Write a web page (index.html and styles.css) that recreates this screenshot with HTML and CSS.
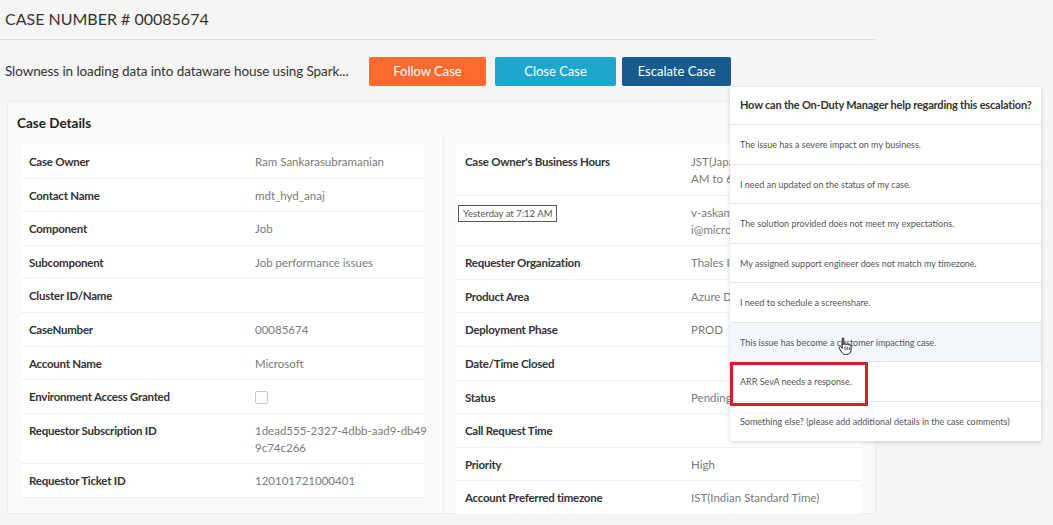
FILE: index.html
```html
<!DOCTYPE html>
<html>
<head>
<meta charset="utf-8">
<link rel="stylesheet" href="styles.css">
</head>
<body>
<div class="page">
  <h1 class="title">CASE NUMBER # 00085674</h1>
  <div class="rule"></div>
  <div class="subject-row">
    <span class="subject">Slowness in loading data into dataware house using Spark...</span>
    <button class="btn btn-follow">Follow Case</button>
    <button class="btn btn-close">Close Case</button>
    <button class="btn btn-escalate">Escalate Case</button>
  </div>

  <section class="panel">
    <h2 class="panel-title">Case Details</h2>
    <div class="cols">
      <div class="col col-left">
        <div class="row"><div class="lbl">Case Owner</div><div class="val">Ram Sankarasubramanian</div></div>
        <div class="row"><div class="lbl">Contact Name</div><div class="val">mdt_hyd_anaj</div></div>
        <div class="row"><div class="lbl">Component</div><div class="val">Job</div></div>
        <div class="row"><div class="lbl">Subcomponent</div><div class="val">Job performance issues</div></div>
        <div class="row"><div class="lbl">Cluster ID/Name</div><div class="val"></div></div>
        <div class="row"><div class="lbl">CaseNumber</div><div class="val">00085674</div></div>
        <div class="row"><div class="lbl">Account Name</div><div class="val">Microsoft</div></div>
        <div class="row"><div class="lbl">Environment Access Granted</div><div class="val"><span class="checkbox"></span></div></div>
        <div class="row"><div class="lbl">Requestor Subscription ID</div><div class="val nowrap">1dead555-2327-4dbb-aad9-db49<br>9c74c266</div></div>
        <div class="row"><div class="lbl">Requestor Ticket ID</div><div class="val">120101721000401</div></div>
      </div>
      <div class="col col-right">
        <div class="row"><div class="lbl">Case Owner's Business Hours</div><div class="val clip">JST(Japan Standard Time) 9:00<br>AM to 6:00 PM</div></div>
        <div class="row"><div class="lbl"><span class="tip">Yesterday at 7:12 AM</span></div><div class="val clip">v-askamani@microsoft.com<br>i@microsoft.com</div></div>
        <div class="row"><div class="lbl">Requester Organization</div><div class="val clip">Thales IND</div></div>
        <div class="row"><div class="lbl">Product Area</div><div class="val clip">Azure Databricks</div></div>
        <div class="row"><div class="lbl">Deployment Phase</div><div class="val clip">PROD</div></div>
        <div class="row"><div class="lbl">Date/Time Closed</div><div class="val"></div></div>
        <div class="row"><div class="lbl">Status</div><div class="val clip">Pending Customer</div></div>
        <div class="row"><div class="lbl">Call Request Time</div><div class="val"></div></div>
        <div class="row"><div class="lbl">Priority</div><div class="val">High</div></div>
        <div class="row"><div class="lbl">Account Preferred timezone</div><div class="val">IST(Indian Standard Time)</div></div>
      </div>
    </div>
  </section>

  <div class="menu">
    <div class="menu-head">How can the On-Duty Manager help regarding this escalation?</div>
    <div class="menu-item">The issue has a severe impact on my business.</div>
    <div class="menu-item">I need an updated on the status of my case.</div>
    <div class="menu-item">The solution provided does not meet my expectations.</div>
    <div class="menu-item">My assigned support engineer does not match my timezone.</div>
    <div class="menu-item">I need to schedule a screenshare.</div>
    <div class="menu-item hover">This issue has become a customer impacting case.</div>
    <div class="menu-item">ARR SevA needs a response.</div>
    <div class="menu-item">Something else? (please add additional details in the case comments)</div>
  </div>
  <div class="highlight"></div>
  <svg class="cursor" width="14" height="19" viewBox="0 0 14 19">
    <path d="M4.5 1.2c.8 0 1.3.6 1.3 1.3v5.2c.2-.6.7-.9 1.3-.9.7 0 1.2.5 1.3 1.1.2-.5.7-.8 1.2-.8.7 0 1.2.5 1.3 1.2.2-.3.6-.5 1-.5.7 0 1.2.6 1.2 1.3v3.6c0 2.6-1.8 4.8-4.4 4.8H7.4c-1.5 0-2.6-.7-3.4-1.9L1.3 11.4c-.4-.6-.2-1.4.4-1.700.6-.3 1.2-.1 1.6.4l.9 1.3V2.5c0-.7.5-1.3 1.3-1.3z" fill="#fff" stroke="#111" stroke-width="1" stroke-linejoin="round"/>
    <path d="M7 9.5v3.5M9.2 9.6v3.4M11.3 10.2v2.8" stroke="#111" stroke-width=".8" fill="none"/>
  </svg>
</div>
</body>
</html>
```
FILE: styles.css
```css
* { box-sizing: border-box; }
html, body { margin: 0; padding: 0; }
body {
  background: #f5f5f5;
  font-family: "Lato", "Open Sans", sans-serif;
  color: #333;
  width: 1053px;
  height: 525px;
  overflow: hidden;
}
.page { position: relative; width: 1053px; height: 525px; }
.title {
  margin: 0;
  padding: 9px 0 0 5px;
  height: 39px;
  font-size: 16px;
  font-weight: 400;
  color: #333;
}
.rule { width: 876px; height: 1px; background: #dedede; }
.subject-row {
  display: flex;
  align-items: center;
  height: 61px;
  padding: 16px 0 15px 5px;
}
.subject { font-size: 13.5px; color: #333; width: 364px; white-space: nowrap; letter-spacing: -0.1px; }
.btn {
  border: 0;
  border-radius: 2px;
  height: 29px;
  color: #fff;
  font-family: "Lato", "Open Sans", sans-serif;
  font-size: 13px;
  padding: 0;
  cursor: pointer;
}
.btn-follow { width: 117px; background: #fe6a2f; }
.btn-close { width: 121px; margin-left: 9px; background: #1ea7cc; }
.btn-escalate { width: 109px; margin-left: 6px; background: #165a8e; }

.panel {
  margin-left: 7px;
  width: 869px;
  height: 413px;
  border: 1px solid #ececec;
  background: #fafafa;
  padding: 0 0 0 13px;
}
.panel-title {
  margin: 0 0 0 -4px;
  padding: 13px 0 0 0;
  height: 43px;
  font-size: 13.5px;
  font-weight: 700;
  color: #222;
}
.cols { display: flex; }
.col-left { width: 403px; }
.col-right {
  margin-left: 19px;
  border-left: 1px solid #ededed;
  padding-left: 12px;
  width: 417px;
  margin-top: -10px;
  padding-top: 10px;
}
.row {
  display: flex;
  background: #fff;
  border-bottom: 1px solid #f0f0f0;
  padding: 8px 0 7.6px 8px;
  line-height: 17px;
  font-size: 11.5px;
}
.col-right .row { padding-left: 9px; width: 405px; }
.lbl { width: 226px; flex: none; font-weight: 700; color: #333; letter-spacing: -0.25px; }
.val { color: #7a7a7a; flex: 1; }
.nowrap { white-space: nowrap; }
.clip { white-space: nowrap; overflow: hidden; max-width: 39px; }
.checkbox {
  display: inline-block;
  width: 13px;
  height: 13px;
  border: 1px solid #c8c8c8;
  border-radius: 2px;
  background: #fff;
  vertical-align: middle;
  margin-top: -2px;
}
.tip {
  display: inline-block;
  margin-left: -7px;
  margin-top: -3px;
  border: 1px solid #555;
  background: #fff;
  font-weight: 400;
  font-size: 9.5px;
  letter-spacing: 0;
  color: #555;
  line-height: 15px;
  padding: 0 4px;
}

.menu {
  position: absolute;
  left: 730px;
  top: 87px;
  width: 311px;
  background: #fff;
  box-shadow: 0 1px 4px rgba(0,0,0,0.18);
  border-radius: 2px;
}
.menu-head {
  height: 38px;
  padding: 11px 0 0 10px;
  font-size: 11px;
  letter-spacing: -0.2px;
  font-weight: 700;
  color: #333;
  border-bottom: 1px solid #e6e6e6;
  white-space: nowrap;
}
.menu-item {
  height: 39.5px;
  padding: 14px 0 0 10px;
  font-size: 9px;
  color: #555;
  border-bottom: 1px solid #e6e6e6;
  white-space: nowrap;
}
.menu-item:last-child { border-bottom: 0; }
.menu-item.hover { background: #f3f6fa; }
.highlight {
  position: absolute;
  left: 730px;
  top: 362px;
  width: 138px;
  height: 44px;
  border: 3px solid #d41f2b;
}
.cursor { position: absolute; left: 838px; top: 337px; }
```
